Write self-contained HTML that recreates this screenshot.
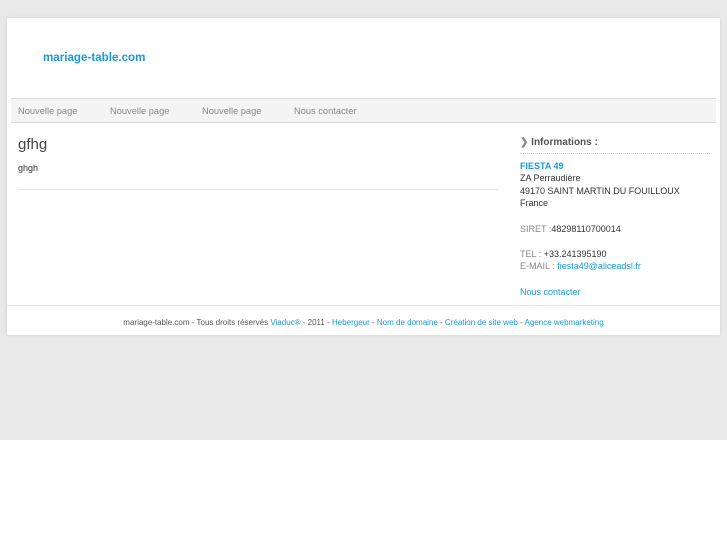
<!DOCTYPE html>
<html><head><style>
body{margin:0;width:727px;height:545px;background:#fff;font-family:"Liberation Sans",sans-serif;position:relative;overflow:hidden}
.bg{position:absolute;left:0;top:0;width:727px;height:440px;background:#e9e9e9}
.box{position:absolute;left:7px;top:18px;width:713px;height:317px;background:#fff;box-shadow:0 0 3px #ccc}
.logo{position:absolute;left:36px;top:33px;font-size:11.6px;font-weight:bold;color:#1a9ad9}
.nav{position:absolute;left:4px;top:80px;width:705px;height:23px;background:#f4f4f4;border-top:1px solid #ddd;border-bottom:1px solid #ddd}
.nav span{position:absolute;top:7px;font-size:9.3px;color:#888}
.h{position:absolute;left:11px;top:118px;font-size:15px;color:#444}
.p{position:absolute;left:11px;top:145px;font-size:9px;color:#333}
.hr{position:absolute;left:11px;top:171px;width:481px;height:1px;background:#e6e6e6}
.side{position:absolute;left:513px;top:118px;font-size:9px;color:#333;line-height:12.6px;width:190px}
.t{font-weight:bold;color:#555;font-size:10px;border-bottom:1px dotted #ccc;padding-bottom:3px;margin-bottom:6px;padding-top:1px}
a{color:#1a9ad9;text-decoration:none}
.g{color:#888}
.foot{position:absolute;left:0;top:287px;width:713px;border-top:1px solid #e4e4e4;text-align:center;font-size:8px;color:#555;padding-top:12px}
</style></head><body>
<div class="bg"></div>
<div class="box">
<div class="logo">mariage-table.com</div>
<div class="nav"><span style="left:7px">Nouvelle page</span><span style="left:99px">Nouvelle page</span><span style="left:191px">Nouvelle page</span><span style="left:283px">Nous contacter</span></div>
<div class="h">gfhg</div>
<div class="p">ghgh</div>
<div class="hr"></div>
<div class="side">
<div class="t"><span style="color:#888">&#10095;</span> Informations :</div>
<div><a style="font-weight:bold">FIESTA 49</a></div>
<div>ZA Perraudière</div>
<div>49170 SAINT MARTIN DU FOUILLOUX</div>
<div>France</div>
<div>&nbsp;</div>
<div><span class="g">SIRET :</span>48298110700014</div>
<div>&nbsp;</div>
<div><span class="g">TEL :</span> +33.241395190</div>
<div><span class="g">E-MAIL :</span> <a>fiesta49@aliceadsl.fr</a></div>
<div>&nbsp;</div>
<div><a>Nous contacter</a></div>
</div>
<div class="foot">mariage-table.com - Tous droits réservés <a>Viaduc®</a> - 2011 - <a>Hebergeur</a> - <a>Nom de domaine</a> - <a>Création de site web</a> - <a>Agence webmarketing</a></div>
</div>
</body></html>
